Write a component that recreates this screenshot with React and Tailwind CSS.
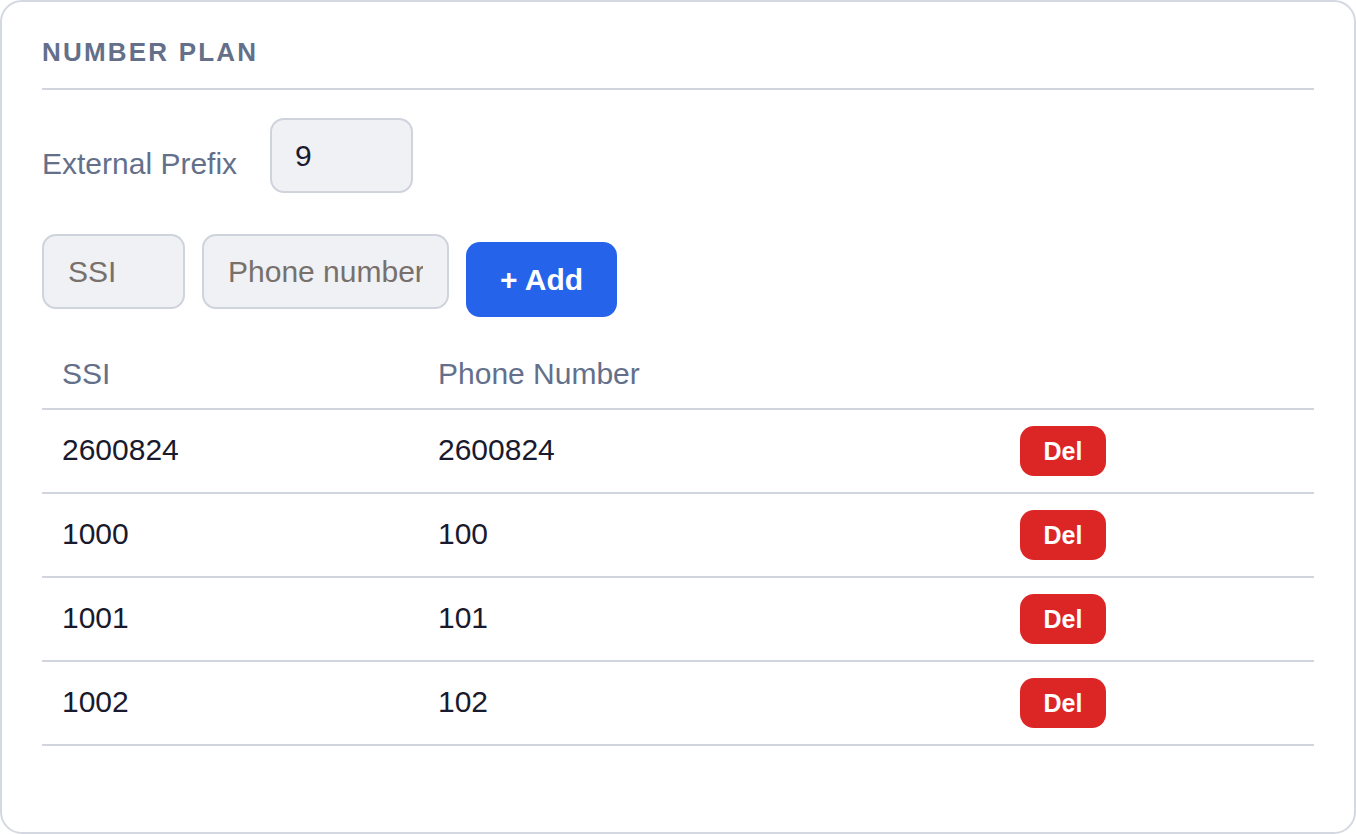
import React, { useState } from 'react';

const initialRows = [
  { ssi: '2600824', phone: '2600824' },
  { ssi: '1000', phone: '100' },
  { ssi: '1001', phone: '101' },
  { ssi: '1002', phone: '102' },
];

const NumberPlan = () => {
  const [prefix, setPrefix] = useState('9');
  const [ssi, setSsi] = useState('');
  const [phone, setPhone] = useState('');
  const [rows, setRows] = useState(initialRows);

  const handleAdd = () => {
    if (!ssi || !phone) return;
    setRows(prev => [...prev, { ssi, phone }]);
    setSsi('');
    setPhone('');
  };

  const handleDelete = (idx) => {
    setRows(prev => prev.filter((_, i) => i !== idx));
  };

  return (
    <div className="h-[834px] bg-white rounded-[22px] border-2 border-[#d4d8e1] px-[40px] pt-[31px] font-['Liberation_Sans',Arial,sans-serif]">
      <h2 className="text-[26px] leading-[39px] font-bold tracking-[2.2px] text-[#64708a] pb-[16px] border-b-2 border-[#d1d5dd]">
        NUMBER PLAN
      </h2>

      <div className="flex items-center gap-[33px] mt-[28px]">
        <label className="text-[30px] leading-[45px] text-[#64708a] mt-[15px]">External Prefix</label>
        <input
          type="text"
          value={prefix}
          onChange={(e) => setPrefix(e.target.value)}
          className="w-[143px] h-[75px] px-[23px] text-[30px] text-[#1a1a2e] bg-[#eff1f5] border-2 border-[#cfd3dc] rounded-[14px] outline-none"
        />
      </div>

      <div className="flex items-start gap-[17px] mt-[41px]">
        <input
          type="text"
          value={ssi}
          onChange={(e) => setSsi(e.target.value)}
          placeholder="SSI"
          className="w-[143px] h-[75px] px-[24px] text-[30px] text-[#1a1a2e] placeholder:text-[#77706b] bg-[#eff1f5] border-2 border-[#cfd3dc] rounded-[14px] outline-none"
        />
        <input
          type="text"
          value={phone}
          onChange={(e) => setPhone(e.target.value)}
          placeholder="Phone number"
          className="w-[247px] h-[75px] px-[24px] text-[30px] text-[#1a1a2e] placeholder:text-[#77706b] bg-[#eff1f5] border-2 border-[#cfd3dc] rounded-[14px] outline-none"
        />
        <button
          onClick={handleAdd}
          className="mt-[8px] w-[151px] h-[75px] bg-[#2563eb] text-white text-[30px] font-bold rounded-[14px]"
        >
          + Add
        </button>
      </div>

      <div className="mt-[23px]">
        <div className="grid grid-cols-[376px_582px_1fr] h-[70px] items-center border-b-2 border-[#d1d5dd] text-[30px] text-[#64708a]">
          <div className="pl-[20px] pb-[2px]">SSI</div>
          <div className="pl-[20px] pb-[2px]">Phone Number</div>
          <div></div>
        </div>
        {rows.map((row, idx) => (
          <div
            key={idx}
            className="grid grid-cols-[376px_582px_1fr] h-[84px] items-center border-b-2 border-[#d1d5dd] text-[30px] text-[#1a1a2e]"
          >
            <div className="pl-[20px] pb-[4px]">{row.ssi}</div>
            <div className="pl-[20px] pb-[4px]">{row.phone}</div>
            <div className="pl-[20px]">
              <button
                onClick={() => handleDelete(idx)}
                className="w-[86px] h-[50px] pt-[2px] bg-[#dc2626] text-white text-[25px] font-bold rounded-[14px]"
              >
                Del
              </button>
            </div>
          </div>
        ))}
      </div>
    </div>
  );
};

export default function App() {
  return <NumberPlan />;
}
